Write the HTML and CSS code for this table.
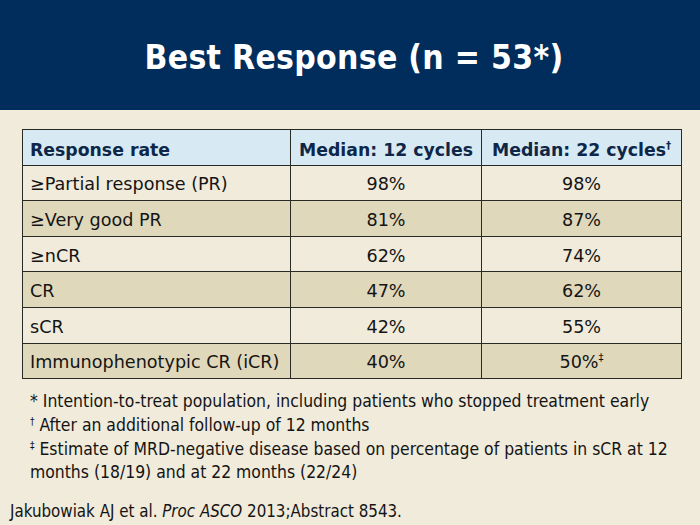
FILE: index.html
```html
<!DOCTYPE html>
<html>
<head>
<meta charset="utf-8">
<link rel="stylesheet" href="styles.css">
</head>
<body>
<header class="banner">
  <h1 class="title">Best Response (n = 53*)</h1>
</header>
<main class="content">
  <table class="resp">
    <colgroup>
      <col class="c1"><col class="c2"><col class="c3">
    </colgroup>
    <thead>
      <tr><th class="left">Response rate</th><th>Median: 12 cycles</th><th>Median: 22 cycles<sup class="mark">†</sup></th></tr>
    </thead>
    <tbody>
      <tr class="odd"><td class="left">≥Partial response (PR)</td><td>98%</td><td>98%</td></tr>
      <tr class="even"><td class="left">≥Very good PR</td><td>81%</td><td>87%</td></tr>
      <tr class="odd"><td class="left">≥nCR</td><td>62%</td><td>74%</td></tr>
      <tr class="even"><td class="left">CR</td><td>47%</td><td>62%</td></tr>
      <tr class="odd"><td class="left">sCR</td><td>42%</td><td>55%</td></tr>
      <tr class="even"><td class="left">Immunophenotypic CR (iCR)</td><td>40%</td><td>50%<sup class="mark">‡</sup></td></tr>
    </tbody>
  </table>
  <div class="notes">
    <p>* Intention-to-treat population, including patients who stopped treatment early</p>
    <p><span class="nmark">†</span> After an additional follow-up of 12 months</p>
    <p><span class="nmark">‡</span> Estimate of MRD-negative disease based on percentage of patients in sCR at 12 months (18/19) and at 22 months (22/24)</p>
  </div>
  <p class="cite">Jakubowiak AJ et al. <i>Proc ASCO</i> 2013;Abstract 8543.</p>
</main>
</body>
</html>
```

FILE: styles.css
```css
html, body {
  margin: 0;
  padding: 0;
}
body {
  width: 700px;
  height: 525px;
  background: #f0ebdb;
  font-family: "DejaVu Sans", Verdana, sans-serif;
  overflow: hidden;
}
.banner {
  height: 110px;
  background: #002d5b;
  display: flex;
  align-items: center;
  justify-content: center;
}
.title {
  margin: 4px 0 0 8px;
  color: #ffffff;
  font-family: "DejaVu Sans Condensed", "DejaVu Sans", sans-serif;
  font-weight: bold;
  font-size: 33.4px;
  letter-spacing: 0.3px;
}
.content {
  padding: 19px 0 0 22px;
}
.resp {
  border-collapse: collapse;
  table-layout: fixed;
  width: 659px;
  font-size: 17.6px;
  color: #141414;
}
.c1 { width: 268px; }
.c2 { width: 191px; }
.c3 { width: 200px; }
.resp th, .resp td {
  border: 1px solid #2a2a24;
  height: 35.6px;
  padding: 3px 7px 0 7px;
  box-sizing: border-box;
  text-align: center;
  vertical-align: middle;
  white-space: nowrap;
}
.resp th {
  background: #d7eaf3;
  color: #0e2748;
  font-weight: bold;
  font-size: 17.3px;
  padding: 6px 2px 0 2px;
}
.resp th.left {
  padding-left: 7px;
}
.resp .left {
  text-align: left;
}
.odd td { background: #f0ebdb; }
.even td { background: #e0d8bb; }
.mark {
  font-size: 10px;
  vertical-align: 7px;
  line-height: 0;
}
.notes {
  margin: 11px 0 0 8px;
  width: 650px;
  font-family: "DejaVu Sans Condensed", "DejaVu Sans", sans-serif;
  font-size: 17.4px;
  line-height: 23.7px;
  color: #141414;
}
.notes p {
  margin: 0;
}
.nmark {
  display: inline-block;
  font-size: 10px;
  line-height: 10px;
  vertical-align: top;
  margin-top: 3px;
}
.cite {
  margin: 16px 0 0 -12px;
  font-family: "DejaVu Sans Condensed", "DejaVu Sans", sans-serif;
  font-size: 16.8px;
  line-height: 20px;
  color: #141414;
}
```
